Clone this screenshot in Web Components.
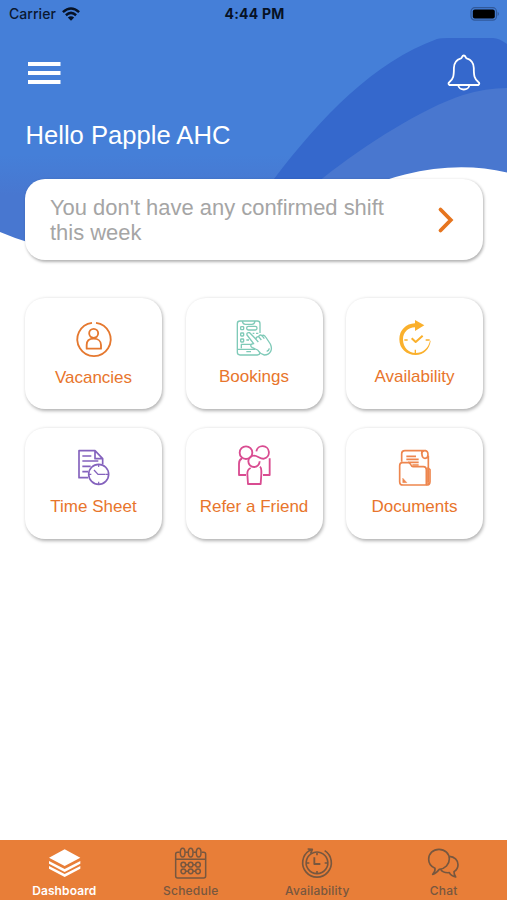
<!DOCTYPE html>
<html lang="en">
<head>
<meta charset="utf-8">
<title>Dashboard</title>
<style>
  body {
    margin: 0;
    background: #fff;
    font-family: "Liberation Sans", Arial, sans-serif;
  }
</style>
</head>
<body>
<app-dashboard></app-dashboard>

<script>
const define = (name, html, setup) => {
  const template = document.createElement('template');
  template.innerHTML = html;

  customElements.define(name, class extends HTMLElement {
    connectedCallback() {
      if (!this.shadowRoot) {
        this.attachShadow({ mode: 'open' });
        this.shadowRoot.appendChild(template.content.cloneNode(true));
        if (setup) setup(this);
      }
    }
  });
};

// drawn on a 120 unit grid for the tiles, 102 for the tabs
const icons = {
  vacancies: `<g stroke="#e5782f" stroke-width="5.5">
    <path d="M66 11.5a50 50 0 1 1-12 0"/><circle cx="59" cy="43" r="13.5"/>
    <path d="M38 89V78c0-12 8-19 21-19s22 7 22 19v11z"/></g>`,
  bookings: `<g stroke="#7fcab8" stroke-width="4">
    <path d="M78 42V14q0-8-8-8H18q-8 0-8 8v86q0 8 8 8h52q8 0 8-8M25 7q2 9 9 9h20q7 0 9-9M11 91h53M22 88V76h34M37 98h14"/>
    <rect x="20" y="23" width="9" height="9" rx="2"/><rect x="20" y="42" width="9" height="9" rx="2"/><rect x="20" y="60" width="9" height="9" rx="2"/>
    <rect x="38" y="22" width="31" height="11" rx="5"/><path d="M56 43h5M66 43h7M37 63h8"/>
    <path fill="#fff" d="M71 93l-16-7q-9-6-1-11l5-1L39 48q-2-9 8-7l19 20q0-9 8-8 2-8 10-3 6-4 11 4l14 21q6 13 1 22-6 11-19 11-12-3-20-15z"/>
    <path d="M66 61l7 8M74 53l8 10M84 50l7 9M98 97q7-2 8-9"/></g>`,
  availability: `<g stroke="#fab02c">
    <path stroke="none" fill="#fab02c" d="M60 3l28 16-28 17V25C39 25 24 41 24 61c0 25 17 41 38 41 21 0 38-14 43-37h2c-3 25-21 43-45 43-28 0-49-19-49-47 0-28 20-47 47-48z"/>
    <path stroke-width="6" d="M50 58l12 11 21-19"/><path stroke-width="4" d="M28 63h10M92 63h12M61 92v12"/></g>`,
  timesheet: `<g stroke="#8462bd" stroke-width="5">
    <path d="M42 86H15V5h48l23 24v17M63 5v24h23M25 21h27M25 36h48M25 52h25M25 68h17"/>
    <circle cx="74" cy="76" r="30"/><path stroke-width="4" d="M60 63l12 13h23"/><path stroke-width="3.5" d="M74 47v7M74 98v7M45 76h7M96 76h7"/></g>`,
  friends: `<g stroke="#d94c91" stroke-width="5.5">
    <circle cx="36" cy="11" r="19"/><path d="M67 7A19 19 0 1 1 90 29C78 31 72 20 60 20a17 17 0 1 0 17 17"/>
    <path d="M24 28q-9 4-9 16v34h21M107 28v50H87"/>
    <path d="M50 57q-10 4-10 17v1l2 30h38l2-30V65q0-8-4-12"/></g>`,
  documents: `<g stroke="#ee864e" stroke-width="5">
    <path d="M20 38V15q0-10 10-10h63M81 8q-2 20 9 20 9-1 9-11 0-12-10-12-9 0-9 10M100 20v80M34 22h29M34 31h37M39 40h32M52 48h19"/>
    <path fill="#fff" d="M14 50q0-9 8-9h18q5 0 8 7 2 5 6 5h31q9 0 9 9v46H24q-10 0-10-10z"/>
    <path stroke-width="5" d="M94 108q11 0 11-10V62l-6-5v50"/><path fill="#ee864e" stroke-width="1" d="M23 87l13 14H23z"/></g>`,
  layers: `<path fill="currentColor" stroke="none" d="M53 7l47 25-47 25L6 32zM6 42l47 24 47-24v8L53 75 6 50zM6 57l47 24 47-24v8L53 90 6 65z"/>`,
  calendar: `<g stroke="currentColor" stroke-width="4.5">
    <path d="M20 16h-6q-6 0-6 6v65q0 6 6 6h78q6 0 6-6V22q0-6-6-6h-6M37 16h8M61 16h8M8 37h90"/>
    <ellipse cx="29" cy="17" rx="7" ry="13"/><ellipse cx="53" cy="17" rx="7" ry="13"/><ellipse cx="77" cy="17" rx="7" ry="13"/>
    <circle cx="31" cy="53" r="7"/><circle cx="53" cy="53" r="7"/><circle cx="75" cy="53" r="7"/>
    <circle cx="31" cy="73" r="7"/><circle cx="53" cy="73" r="7"/><circle cx="75" cy="73" r="7"/>
    <path d="M38 53h8M60 53h8M38 73h8M60 73h8"/></g>`,
  clock: `<g stroke="currentColor" stroke-width="5">
    <path d="M74 11a43 43 0 1 1-46 0l9-4M23 6l14 1-5 13"/><path d="M40 17a32.5 32.5 0 1 0 22 0q-11-4-22 0"/>
    <path stroke-width="5.5" d="M43 31v20h18"/><path d="M51 17v8M51 72v8M20 48h8M74 48h8"/></g>`,
  chat: `<g stroke="currentColor" stroke-width="5">
    <path d="M27 64C15 59 8 49 8 37 8 20 21 7 39 7s31 13 31 29-13 30-30 31c-5 7-10 13-20 15 6-6 8-11 7-18z"/>
    <path d="M70 28c15 1 26 11 26 25 0 9-4 16-12 21 0 6 1 10 5 16-10-2-16-7-19-13-13 1-22-3-26-10"/></g>`
};

const drawIcon = host => {
  const svg = host.shadowRoot.querySelector('svg');
  svg.innerHTML = icons[host.getAttribute('icon')];
};

define('status-bar', `
  <style>
    :host {
      display: grid;
      grid-template-columns: 1fr auto 1fr;
      align-items: center;
      height: 27px;
      padding: 0 7px 0 9px;
      font: 500 14px/27px Inter, sans-serif;
      color: #0b1830;
    }
    .carrier { display: flex; align-items: center; gap: 6px; letter-spacing: .05px; }
    .time { font-weight: 700; letter-spacing: .2px; color: #071225; }
    .battery { justify-self: end; }
    svg { display: block; }
  </style>
  <div class="carrier"><span>Carrier</span>
    <svg width="18" height="14" viewBox="0 0 18 14" fill="none" stroke="#071225" stroke-width="2.5">
      <path d="M.9 5.1q8.1-7.3 16.2 0M3.9 8.2q5.1-4.6 10.2 0"/><path fill="#071225" stroke="none" d="M9 13.8l3.2-3.3q-3.2-2.5-6.4 0z"/>
    </svg>
  </div>
  <div class="time">4:44 PM</div>
  <svg class="battery" width="30" height="14" viewBox="0 0 30 14">
    <rect x="1" y=".7" width="25.5" height="12.4" rx="3.8" fill="none" stroke="#31599a" stroke-width="1.2"/>
    <rect x="2.8" y="2.4" width="22" height="9" rx="2" fill="#000"/><path fill="#31599a" d="M27.7 4.7q2.5 2.2 0 4.4z"/>
  </svg>
`);

define('wave-background', `
  <style>
    :host { position: absolute; inset: 0 0 auto; z-index: -1; }
    svg { display: block; width: 100%; height: 250px; }
  </style>
  <svg viewBox="0 0 507 250" preserveAspectRatio="none">
    <defs><linearGradient id="base" x2="0" y2="1">
      <stop offset=".62" stop-color="#457fd8"/><stop offset=".78" stop-color="#4877d0"/>
    </linearGradient></defs>
    <path fill="url(#base)" d="M0 0H507V180H386L190 250H60Q28 244 0 232z"/>
    <path fill="#3568cc" d="M260 196L274 179C322 116 374 62 437 39Q441 38 449 38H493Q499 38 507 44V180L386 190z"/>
    <path fill="#4977cf" d="M304 194Q314 185 323 178C366 144 423 108 463 95Q486 88 507 88V180L386 190z"/>
    <path fill="#fff" d="M365 188Q386 179 405 174.5C441 165.5 475 165 507 172.5V250H365z"/>
  </svg>
`);

define('page-header', `
  <style>
    :host { display: block; height: 152px; box-sizing: border-box; padding: 26px 25px 0 25.5px; color: #fff; }
    .actions { display: flex; justify-content: space-between; align-items: center; height: 40px; }
    h1 { margin: 27px 0 0; font-size: 25.6px; font-weight: 400; line-height: 30px; }
    svg { display: block; fill: none; stroke: #fff; }
  </style>
  <div class="actions">
    <svg width="36" height="30" viewBox="0 0 36 30" stroke-width="3.8"><path d="M2 6H34.5M2 15H34.5M2 24H34.5"/></svg>
    <svg width="36" height="40" viewBox="0 0 36 40" stroke-width="1.8" stroke-linejoin="round">
      <path d="M3.5 32q-2-1.5 0-3c4-3.3 4.4-6 4.4-14C7.9 9 10.5 6.7 14.9 5.3 16.6 4.6 15.6 2.5 17.8 2.5s1.200 2.100 2.900 2.800C25 6.700 27.800 9 27.800 15c0 8 .5 10.700 4.500 14q2 1.500 0 3zM12.300 32c0 6 11 6 11 0"/>
    </svg>
  </div>
  <h1><slot></slot></h1>
`);

define('shift-card', `
  <style>
    :host {
      display: flex;
      align-items: center;
      justify-content: space-between;
      box-sizing: border-box;
      height: 81px;
      margin: 0 24px 0 25px;
      padding: 0 28px 0 25px;
      border-radius: 20px;
      background: #fff;
      box-shadow: 1px 1.5px 3px rgba(0, 0, 0, .3);
      color: #a5a5a5;
      font-size: 21.95px;
      line-height: 25px;
    }
    p { width: 345px; margin: 0; }
    svg { flex: none; }
  </style>
  <p><slot></slot></p>
  <svg width="18" height="28" viewBox="0 0 18 28" fill="none" stroke="#e6751f" stroke-width="3.8" stroke-linecap="round"><path d="M3.5 3.5L13.8 14 3.5 24.5"/></svg>
`);

define('menu-tile', `
  <style>
    :host {
      display: flex;
      flex-direction: column;
      align-items: center;
      box-sizing: border-box;
      height: 111px;
      padding-top: 21px;
      border-radius: 20px;
      background: #fff;
      box-shadow: 1px 1.5px 3.5px rgba(0, 0, 0, .3);
      color: #e8752c;
      font-size: 17px;
      line-height: 20px;
      white-space: nowrap;
    }
    svg { width: 40px; height: 40px; overflow: visible; fill: none; }
    span { margin-top: 8px; }
    :host([icon="vacancies"]) span { margin-top: 9px; }
  </style>
  <svg viewBox="0 0 120 120" stroke-linejoin="round"></svg>
  <span><slot></slot></span>
`, drawIcon);

define('menu-grid', `
  <style>
    :host {
      display: grid;
      grid-template-columns: repeat(3, 1fr);
      gap: 19px 23.5px;
      margin: 38px 24px 0 25px;
    }
  </style>
  <slot></slot>
`);

define('tab-item', `
  <style>
    :host {
      display: flex;
      flex: 1;
      flex-direction: column;
      align-items: center;
      padding-top: 7px;
      color: #77573f;
      font: 500 12px/16px Inter, sans-serif;
      letter-spacing: .22px;
    }
    :host([active]) { color: #fff; font-weight: 600; letter-spacing: .1px; }
    svg { width: 34px; height: 34px; margin-right: 1.5px; fill: none; }
    span { margin-top: 2px; }
  </style>
  <svg viewBox="0 0 102 102" stroke-linejoin="round"></svg>
  <span><slot></slot></span>
`, drawIcon);

define('tab-bar', `
  <style>
    :host { display: flex; height: 60px; margin-top: auto; padding-left: 1px; background: #e87e38; }
  </style>
  <slot></slot>
`);

define('app-dashboard', `
  <style>
    :host {
      display: flex;
      flex-direction: column;
      position: relative;
      z-index: 0;
      height: 900px;
      overflow: hidden;
    }
  </style>
  <wave-background></wave-background>
  <status-bar></status-bar>
  <page-header>Hello Papple AHC</page-header>
  <shift-card>You don't have any confirmed shift this week</shift-card>
  <menu-grid>
    <menu-tile icon="vacancies">Vacancies</menu-tile>
    <menu-tile icon="bookings">Bookings</menu-tile>
    <menu-tile icon="availability">Availability</menu-tile>
    <menu-tile icon="timesheet">Time Sheet</menu-tile>
    <menu-tile icon="friends">Refer a Friend</menu-tile>
    <menu-tile icon="documents">Documents</menu-tile>
  </menu-grid>
  <tab-bar>
    <tab-item icon="layers" active>Dashboard</tab-item>
    <tab-item icon="calendar">Schedule</tab-item>
    <tab-item icon="clock">Availability</tab-item>
    <tab-item icon="chat">Chat</tab-item>
  </tab-bar>
`);
</script>
</body>
</html>
